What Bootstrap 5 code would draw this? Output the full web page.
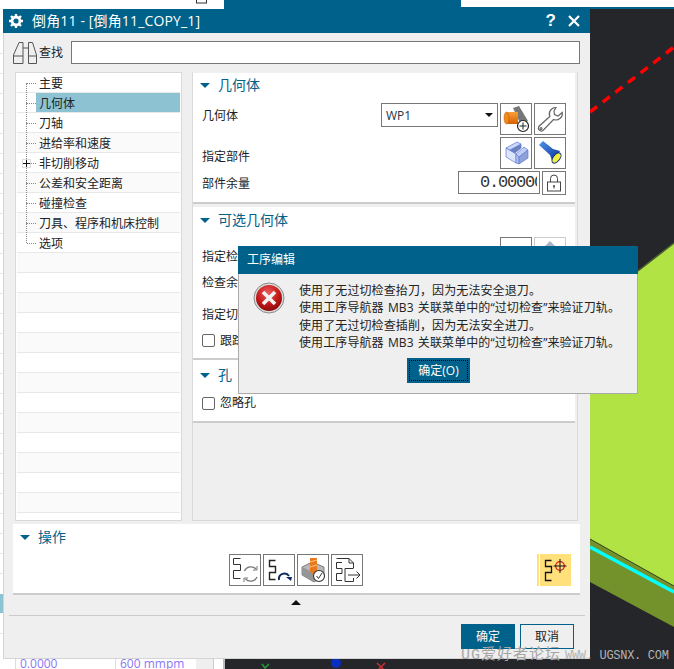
<!DOCTYPE html>
<html lang="en">
  <head>
    <meta charset="utf-8" />
    <meta name="viewport" content="width=device-width, initial-scale=1" />
    <title>工序编辑</title>
    <link href="https://cdn.jsdelivr.net/npm/bootstrap@5.3.3/dist/css/bootstrap.min.css" rel="stylesheet" />
    <style>
      html, body { margin: 0; background: #fff; overflow: hidden; }
      body { font-family: "Open Sans", "Noto Sans CJK SC", sans-serif; font-size: 12px; line-height: 1.2; color: #222; }
      svg { display: block; }
      .desk { position: relative; width: 674px; height: 669px; overflow: hidden; }
      .desk-bg { position: absolute; left: 0; top: 0; }

      /* main dialog */
      .op-win { position: absolute; left: 3px; top: 9px; width: 587px; height: 650px; background: #efefef; border-left: 1px solid #d4d4d4; border-bottom: 1px solid #d4d4d4; }
      .win-head { height: 24px; margin-left: -1px; background: #00628a; color: #fff; font-size: 14px; padding-left: 6px; }
      .win-head .head-txt { margin-left: 9px; letter-spacing: .15px; }
      .head-help { font: bold 17px "Liberation Sans", sans-serif; margin-right: 12px; }
      .head-x { margin-right: 10px; }
      .search-row { height: 39px; padding: 8px 10px 0 9px; }
      .search-ico { margin-top: 1px; }
      .search-lbl { width: 32px; margin-left: 2px; line-height: 23px; }
      .search-box { flex: 1; height: 23px; background: #fff; border: 1px solid #777; }
      .body-row { height: 449px; padding-left: 11px; }

      .tree-panel { width: 167px; height: 449px; background: #fff; border: 1px solid #d9d9d9; padding: 0 1px; overflow: hidden; }
      .tree-list { margin: 0; padding: 0; list-style: none; position: relative; }
      .tree-list li { position: relative; height: 20px; line-height: 22px; padding-left: 22px; border-bottom: 1px solid #e8e8e8; box-sizing: border-box; white-space: nowrap; }
      .tree-list li:nth-child(even) { background: #fafafa; }
      .tree-list li.has-branch::before { content: ""; position: absolute; left: 10px; top: 10px; width: 9px; border-top: 1px dotted #888; }
      .tree-list li.has-branch::after { content: ""; position: absolute; left: 9px; top: -10px; height: 20px; border-left: 1px dotted #888; }
      .tree-list li:first-child.has-branch::after { top: 10px; height: 10px; }
      .tree-list li.on-row { background: linear-gradient(to right, #fff 19px, #8cc2d2 19px); }
      .tree-plus { position: absolute; z-index: 1; left: 5px; top: 6px; width: 9px; height: 9px; background: #fff; border: 1px solid #ddd; }

      .form-col { width: 386px; height: 449px; margin-left: 10px; border: 1px solid #d9d9d9; border-top: 1px solid #efefef; padding-right: 2px; }
      .sect { background: #fff; border-bottom: 2px solid #ccc; }
      .sect-1 { height: 131px; margin-bottom: 3px; }
      .sect-2 { height: 153px; }
      .sect-3 { height: 63px; }
      .sect-title { height: 25px; padding-left: 7px; color: #00628a; font-size: 14px; }
      .sect-2 .sect-title { height: 26px; }
      .tri-down { display: inline-block; width: 0; height: 0; border-left: 5px solid transparent; border-right: 5px solid transparent; border-top: 5px solid #00628a; margin-right: 8px; }
      .form-line { padding-left: 9px; padding-right: 9px; }
      .ic-btn { width: 32px; height: 32px; padding: 0; background: #fff; border: 1px solid #777; border-radius: 0; display: flex; align-items: center; justify-content: center; flex-shrink: 0; }
      .ic-btn.is-off { border-color: #ccc; }
      .ic-btn.is-hot { background: #ffe07a; border: 0; border-left: 1px solid #ffe07a; width: 34px; position: relative; }
      .ic-btn.is-hot::before { content: ""; position: absolute; left: 1px; top: 0; bottom: 0; width: 1px; background: #fff; }
      .ic-gap { margin-left: 2px; }
      .wp-select { position: relative; width: 117px; height: 24px; margin-right: 2px; border: 1px solid #777; background: #fff; line-height: 24px; padding-left: 4px; color: #234; }
      .wp-select::after { content: ""; position: absolute; right: 4px; top: 9px; border-left: 4px solid transparent; border-right: 4px solid transparent; border-top: 4px solid #111; }
      .num-box { width: 82px; height: 23px; border: 1px solid #777; background: #fff; padding-left: 21px; margin-right: 2px; }
      .num-box span { display: block; width: 57px; overflow: hidden; white-space: nowrap; font: 17px/21px "Liberation Mono", monospace; letter-spacing: -1.2px; color: #333; }
      .lock-btn { width: 24px; height: 24px; }
      .chk-row { padding-left: 9px; }
      .chk-row .form-check-input { width: 13px; height: 13px; margin: 0 5px 0 0; border: 1px solid #666; border-radius: 2px; float: none; flex-shrink: 0; }

      .ops-box { width: 567px; height: 71px; margin: 3px 0 0 9px; background: #fff; border-bottom: 2px solid #ccc; }
      .ops-title { height: 26px; margin-bottom: 4px; padding-left: 7px; font-size: 14px; color: #00628a; }
      .ops-btns { padding: 0 9px 0 216px; gap: 2px; }
      .fold-row { height: 21px; margin-left: 5px; margin-right: 5px; border-bottom: 1px solid #ccc; }
      .tri-up { display: block; width: 0; height: 0; border-left: 5px solid transparent; border-right: 5px solid transparent; border-bottom: 5px solid #111; margin: 5px 0 0 -2px; }
      .foot-row { padding: 8px 16px 0 0; gap: 5px; }
      .teal-btn, .line-btn { width: 54px; height: 25px; padding: 0; border-radius: 0; font-size: 12px; line-height: 1; }
      .teal-btn { background: #00628a; border: 1px solid #00628a; color: #fff; }
      .line-btn { background: #efefef; border: 1px solid #00628a; color: #222; }

      /* message box */
      .msg-win { position: absolute; left: 238px; top: 246px; width: 400px; height: 148px; background: #efefef; border: 1px solid #aaa; border-top: 0; }
      .msg-head { height: 28px; margin: 0 -1px; background: #00628a; color: #fff; line-height: 28px; padding-left: 9px; }
      .msg-body { height: 84px; padding: 8px 0 0 14px; }
      .msg-text { margin-left: 14px; line-height: 17.3px; white-space: nowrap; color: #222; letter-spacing: .1px; word-spacing: 1px; }
      .ok-btn { width: 63px; height: 25px; padding: 2px; margin: 0 0 0 168px; background: #00628a; border: 0; border-radius: 0; color: #fff; font-size: 12px; display: block; }
      .ok-btn span { display: block; height: 21px; line-height: 19px; border: 1px dotted #000; }

      .wmark { position: absolute; left: 461px; top: 646px; color: #a6a6a6; white-space: nowrap; line-height: 18px; }
      .wm-cn { font: 15px/18px "Liberation Mono", "Noto Sans CJK SC", monospace; letter-spacing: 1px; }
      .wm-en { font: 12px/18px "Liberation Mono", monospace; letter-spacing: -.3px; margin-left: 4px; color: #b4b4b4; }
    </style>
  </head>
  <body>
    <div class="desk">
      <!-- stuff behind the dialogs -->
      <svg class="desk-bg" width="674" height="669" viewBox="0 0 674 669">
        <rect width="674" height="669" fill="#fff" />
        <rect x="224" y="0" width="237" height="9" fill="#00628a" />
        <rect x="224" y="7" width="450" height="2" fill="#00628a" />
        <rect x="196.500" y="-3" width="10" height="6" fill="none" stroke="#333" />
        <rect x="590" y="9" width="84" height="660" fill="#25262a" />
        <rect x="225" y="659" width="449" height="10" fill="#25262a" />
        <path d="M590 112 L674 47" stroke="#f00" stroke-width="3.500" stroke-dasharray="9 7" fill="none" />
        <path d="M560 331 L674 243 V586 L590 539 Z" fill="#b2e344" />
        <path d="M638 271 L674 243" stroke="#4e6030" stroke-width="1.500" />
        <path d="M590 539 L674 586 V627 L590 582 Z" fill="#74922c" />
        <path d="M590 539 L674 586" stroke="#3c4a22" stroke-width="1" />
        <path d="M590 547 L674 592" stroke="#0ff" stroke-width="3.500" />
        <rect x="0" y="594" width="3" height="19" fill="#8cc2d2" />
        <path d="M0 53.500H3M0 73.500H3M0 93.500H3M0 113.500H3M0 133.500H3M0 153.500H3M0 173.500H3M0 193.500H3M0 213.500H3M0 233.500H3M0 253.500H3M0 273.500H3M0 293.500H3M0 313.500H3M0 333.500H3M0 353.500H3M0 373.500H3M0 393.500H3M0 413.500H3M0 433.500H3M0 453.500H3M0 473.500H3M0 493.500H3M0 513.500H3M0 533.500H3M0 553.500H3M0 573.500H3M0 633.500H3" stroke="#e6e6e6" />
        <path d="M15.500 659V669M115.500 659V669" stroke="#ddd" />
        <rect x="196" y="659" width="17" height="10" fill="#efefef" />
        <path d="M213.500 659V669" stroke="#ccc" />
        <rect x="223" y="659" width="2" height="10" fill="#bbb" />
        <text x="20" y="668" font-family="Open Sans" font-size="12" fill="#8a78f5">0.0000</text>
        <text x="120" y="668" font-family="Open Sans" font-size="12" fill="#8a78f5">600 mmpm</text>
        <path d="M262 664 L265 668 L269 664" stroke="#2a9a3c" stroke-width="1.500" fill="none" />
        <circle cx="336" cy="663" r="5" fill="#0a2fc0" />
        <path d="M377 663 L385 671 M385 663 L377 671" stroke="#c83030" stroke-width="1.500" />
      </svg>

      <div class="op-win d-flex flex-column">
        <div class="win-head d-flex align-items-center">
          <svg width="14" height="14" viewBox="0 0 14 14">
            <circle cx="7" cy="7" r="4" fill="none" stroke="#fff" stroke-width="2.800" />
            <path d="M7 0V3M7 11V14M0 7H3M11 7H14M2 2L4 4M10 10L12 12M12 2L10 4M4 10L2 12" stroke="#fff" stroke-width="2.400" />
          </svg>
          <span class="head-txt">倒角11 - [倒角11_COPY_1]</span>
          <span class="head-help ms-auto">?</span>
          <svg class="head-x" width="12" height="12" viewBox="0 0 12 12"><path d="M1 1L11 11M11 1L1 11" stroke="#fff" stroke-width="2.200" /></svg>
        </div>

        <div class="search-row d-flex align-items-start">
          <svg class="search-ico" width="24" height="22" viewBox="0 0 24 22" fill="none" stroke="#555" stroke-width="1">
            <path d="M6 .5H10V21.500H.5V13Z" />
            <path d="M15.500 .5H19.500L23.500 13V21.500H15.500Z" />
            <path d="M.5 14H10M15.500 14H23.500M10 6H15.500" />
          </svg>
          <span class="search-lbl">查找</span>
          <div class="search-box"></div>
        </div>

        <div class="body-row d-flex">
          <div class="tree-panel">
            <ul class="tree-list">
              <li class="has-branch">主要</li>
              <li class="has-branch on-row">几何体</li>
              <li class="has-branch">刀轴</li>
              <li class="has-branch">进给率和速度</li>
              <li class="has-branch"><span class="tree-plus d-flex align-items-center justify-content-center"><svg width="7" height="7" viewBox="0 0 7 7"><path d="M3.500 0V7M0 3.500H7" stroke="#111" /></svg></span>非切削移动</li>
              <li class="has-branch">公差和安全距离</li>
              <li class="has-branch">碰撞检查</li>
              <li class="has-branch">刀具、程序和机床控制</li>
              <li class="has-branch">选项</li>
              <li></li><li></li><li></li><li></li><li></li><li></li><li></li>
              <li></li><li></li><li></li><li></li><li></li><li></li>
            </ul>
          </div>

          <div class="form-col">
            <div class="sect sect-1">
              <div class="sect-title d-flex align-items-center"><span class="tri-down"></span>几何体</div>
              <div class="form-line d-flex" style="margin-top:5px">
                <span class="me-auto" style="line-height:26px">几何体</span>
                <div class="wp-select">WP1</div>
                <button class="ic-btn" type="button">
                  <svg width="30" height="30" viewBox="0 0 30 30">
                    <defs><linearGradient id="og" x1="0" y1="0" x2="0" y2="1"><stop offset="0" stop-color="#f7a13a" /><stop offset="1" stop-color="#d85f00" /></linearGradient></defs>
                    <path d="M12 4L18 2L27 17L20 21Z" fill="#777" />
                    <rect x="6" y="8" width="11" height="12" rx="1" fill="url(#og)" />
                    <ellipse cx="5.500" cy="14" rx="2.500" ry="6" fill="#f08a1c" stroke="#c05800" stroke-width=".5" />
                    <circle cx="22" cy="22" r="5.500" fill="#fff" stroke="#222" stroke-width="1.200" />
                    <path d="M22 18.500V25.500M18.500 22H25.500" stroke="#222" />
                  </svg>
                </button>
                <button class="ic-btn ic-gap" type="button">
                  <svg width="30" height="30" viewBox="0 0 30 30" fill="#fff" stroke="#666" stroke-width="1.200">
                    <path d="M21 3.500A6.500 6.500 0 0 0 14.800 12.500L3.800 22.500A3 3 0 0 0 8 26.500L18.500 15.500A6.500 6.500 0 0 0 27.300 8.500L23 12L19.500 10.500L19 7Z" />
                    <circle cx="6" cy="24.500" r="1" />
                  </svg>
                </button>
              </div>
              <div class="form-line d-flex" style="margin-top:2px">
                <span class="me-auto" style="padding-top:13px">指定部件</span>
                <button class="ic-btn" type="button">
                  <svg width="30" height="30" viewBox="0 0 30 30" stroke="#5c78d8" stroke-width=".7">
                    <path d="M5 10L15 16V25L5 19Z" fill="#dde5fb" />
                    <path d="M9 12L20 6V10L14 15Z" fill="#6e80b8" />
                    <path d="M5 10L16 4L20 6L9 12Z" fill="#cdd8fa" />
                    <path d="M15 16L23 9L27 12L18 19Z" fill="#c2cff5" />
                    <path d="M15 16L18 19V26L15 25Z" fill="#b4c3ee" />
                    <path d="M18 19L27 12V20L18 26Z" fill="#8ea2d8" />
                  </svg>
                </button>
                <button class="ic-btn ic-gap" type="button">
                  <svg width="30" height="30" viewBox="0 0 30 30">
                    <defs><linearGradient id="bl" x1="0" y1="0" x2="1" y2="1"><stop offset="0" stop-color="#4d96e8" /><stop offset="1" stop-color="#0a2a9a" /></linearGradient></defs>
                    <path d="M4 7L8 3L18 11L25 13L18 25L15 17Z" fill="url(#bl)" />
                    <ellipse cx="21.500" cy="20" rx="6" ry="3.300" transform="rotate(-52 21.500 20)" fill="#f2ee3c" stroke="#0a2a8a" />
                  </svg>
                </button>
              </div>
              <div class="form-line d-flex" style="margin-top:2px">
                <span class="me-auto" style="padding-top:6px">部件余量</span>
                <div class="num-box"><span>0.00000</span></div>
                <button class="ic-btn lock-btn" type="button">
                  <svg width="16" height="18" viewBox="0 0 16 18" fill="none" stroke="#444">
                    <path d="M4.500 8V4.500A3.500 3.500 0 0 1 11.500 4.500V8" />
                    <rect x="1.500" y="8" width="13" height="9" />
                    <circle cx="8" cy="12" r="1" fill="#444" stroke="none" />
                    <path d="M8 12V14.500" />
                  </svg>
                </button>
              </div>
            </div>

            <div class="sect sect-2">
              <div class="sect-title d-flex align-items-center"><span class="tri-down"></span>可选几何体</div>
              <div class="form-line d-flex" style="margin-top:4px">
                <span class="me-auto" style="padding-top:13px">指定检查</span>
                <button class="ic-btn" type="button"></button>
                <button class="ic-btn is-off ic-gap" type="button">
                  <svg width="30" height="30" viewBox="0 0 30 30"><path d="M9 9L15 3L21 9L15 13Z" fill="#a8b4c8" /></svg>
                </button>
              </div>
              <div class="form-line" style="margin-top:7px">检查余量</div>
              <div class="form-line" style="margin-top:18px">指定切削区域</div>
              <div class="chk-row d-flex align-items-center" style="margin-top:11px">
                <input class="form-check-input" type="checkbox" id="followChk" />
                <label for="followChk">跟踪</label>
              </div>
            </div>

            <div class="sect sect-3">
              <div class="sect-title d-flex align-items-center" style="height:31px"><span class="tri-down"></span>孔</div>
              <div class="chk-row d-flex align-items-center" style="margin-top:5px">
                <input class="form-check-input" type="checkbox" id="skipHole" />
                <label for="skipHole">忽略孔</label>
              </div>
            </div>
          </div>
        </div>

        <div class="ops-box">
          <div class="ops-title d-flex align-items-center"><span class="tri-down"></span>操作</div>
          <div class="ops-btns d-flex">
            <button class="ic-btn" type="button">
              <svg width="30" height="30" viewBox="0 0 30 30" fill="none">
                <path d="M10.500 3.500H3.500V9.500H10.500V15.500H3.500V23.500H10.500" stroke="#333" />
                <path d="M14.500 16A7 7 0 0 1 26 14M27 22A7 7 0 0 1 15.500 24" stroke="#777" stroke-width="1.300" />
                <path d="M27 11V15H23M14 27V23H18" stroke="#777" />
              </svg>
            </button>
            <button class="ic-btn" type="button">
              <svg width="30" height="30" viewBox="0 0 30 30" fill="none">
                <path d="M11.500 5.500H5.500V11.500H11.500V17.500H5.500V24.500H11.500" stroke="#222" stroke-width="1.400" />
                <path d="M15 25A5.500 5.500 0 0 1 25 21" stroke="#0b2a60" stroke-width="2" />
                <path d="M22 22H28L27 26Z" fill="#0b2a60" />
              </svg>
            </button>
            <button class="ic-btn" type="button">
              <svg width="30" height="30" viewBox="0 0 30 30">
                <path d="M4 12L14 7L26 12V21L16 27L4 20Z" fill="#b8b8b8" stroke="#666" stroke-width=".8" />
                <path d="M4 12L16 18V27L4 20Z" fill="#969696" />
                <path d="M12 3H19V16L15.500 20L12 16Z" fill="#e8781a" />
                <path d="M12 7L19 5M12 12L19 10" stroke="#ffc080" stroke-width="1.200" />
                <circle cx="21" cy="21" r="5.500" fill="#fff" stroke="#333" stroke-width="1.100" />
                <path d="M18.500 21L20.500 23.500L24 18" fill="none" stroke="#333" />
              </svg>
            </button>
            <button class="ic-btn" type="button">
              <svg width="30" height="30" viewBox="0 0 30 30" fill="none" stroke="#333">
                <path d="M4.500 3.500H17L21.500 8V13M17 3.500V8H21.500" />
                <path d="M10 7.500H4.500V13.500H10V18.500H4.500V25.500H10" />
                <path d="M13 13.500H21.500M13 13.500V26.500H21.500V23" />
                <path d="M16 20H28M24.500 16.500L28 20L24.500 23.500" />
              </svg>
            </button>
            <button class="ic-btn is-hot ms-auto" type="button">
              <svg width="30" height="30" viewBox="0 0 30 30" fill="none">
                <path d="M11.500 5.500H5.500V11.500H11.500V17.500H5.500V25.500H11.500" stroke="#111" stroke-width="1.300" />
                <circle cx="20" cy="11" r="4.300" stroke="#e01818" stroke-width="1.300" />
                <path d="M20 4V18M13.500 11H26.500" stroke="#111" />
              </svg>
            </button>
          </div>
        </div>

        <div class="fold-row d-flex justify-content-center"><span class="tri-up"></span></div>

        <div class="foot-row d-flex justify-content-end">
          <button class="btn teal-btn" type="button">确定</button>
          <button class="btn line-btn" type="button">取消</button>
        </div>
      </div>

      <div class="msg-win">
        <div class="msg-head">工序编辑</div>
        <div class="msg-body d-flex">
          <svg width="32" height="32" viewBox="0 0 32 32" style="flex-shrink:0">
            <defs>
              <radialGradient id="rd" cx=".45" cy=".3" r=".8"><stop offset="0" stop-color="#ef5a5a" /><stop offset=".55" stop-color="#c01818" /><stop offset="1" stop-color="#7a0606" /></radialGradient>
            </defs>
            <circle cx="16" cy="16" r="15" fill="#dcdcdc" stroke="#8a8a8a" />
            <circle cx="16" cy="16" r="13" fill="url(#rd)" />
            <path d="M10 10L22 22M22 10L10 22" stroke="#f2f2f2" stroke-width="3.600" />
          </svg>
          <div class="msg-text">
            使用了无过切检查抬刀，因为无法安全退刀。<br />
            使用工序导航器 MB3 关联菜单中的“过切检查”来验证刀轨。<br />
            使用了无过切检查插削，因为无法安全进刀。<br />
            使用工序导航器 MB3 关联菜单中的“过切检查”来验证刀轨。
          </div>
        </div>
        <button class="btn ok-btn" type="button"><span>确定(O)</span></button>
      </div>

      <div class="wmark"><span class="wm-cn">UG爱好者论坛</span><span class="wm-en">WWW. UGSNX. COM</span></div>
    </div>

    <script src="https://cdn.jsdelivr.net/npm/bootstrap@5.3.3/dist/js/bootstrap.bundle.min.js"></script>
  </body>
</html>
